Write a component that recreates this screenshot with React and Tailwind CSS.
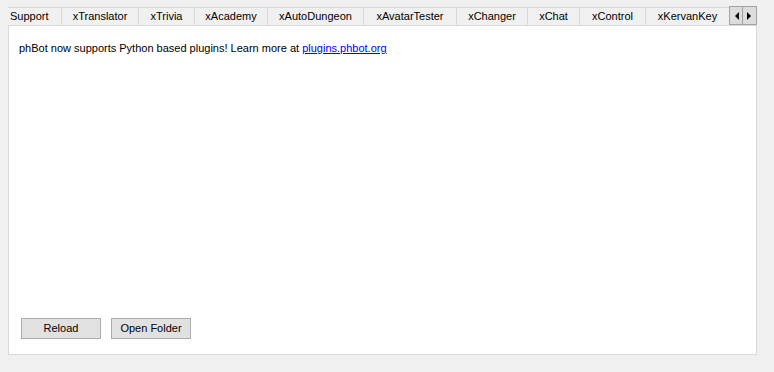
import React from "react";

const tabs = [
  { label: "Support", w: 53, left: true },
  { label: "xTranslator", w: 77 },
  { label: "xTrivia", w: 56 },
  { label: "xAcademy", w: 73 },
  { label: "xAutoDungeon", w: 96 },
  { label: "xAvatarTester", w: 93 },
  { label: "xChanger", w: 71 },
  { label: "xChat", w: 52 },
  { label: "xControl", w: 66 },
  { label: "xKervanKey", w: 84 },
];

export default function App() {
  return (
    <div
      className="relative w-[774px] h-[372px] bg-[#f0f0f0] text-[11px] text-black overflow-hidden"
      style={{ fontFamily: '"Liberation Sans", Arial, sans-serif' }}
    >
      <div className="pt-[7px] pl-[8px]">
        <div className="flex w-[749px] h-[18px] overflow-hidden">
          {tabs.map((t) => (
            <div
              key={t.label}
              className={
                "shrink-0 h-[18px] border-t border-[#d9d9d9] bg-[#f0f0f0] flex items-center leading-none " +
                (t.left ? "justify-start pl-[2px]" : "justify-center border-l")
              }
              style={{ width: t.w }}
            >
              {t.label}
            </div>
          ))}
          <div className="flex-1 h-[18px] border-t border-l border-[#d9d9d9]" />
        </div>
        <div className="w-[749px] h-[330px] bg-white border border-[#d9d9d9] flex flex-col justify-between pt-[15px] pl-[10px] pb-[15px]">
          <div className="leading-[14px]">
            phBot now supports Python based plugins! Learn more at{" "}
            <span className="text-[#0000ff] underline">plugins.phbot.org</span>
          </div>
          <div className="flex gap-[10px] pl-[2px]">
            <button className="w-[80px] h-[21px] bg-[#e1e1e1] border border-[#adadad] leading-none">
              Reload
            </button>
            <button className="w-[80px] h-[21px] bg-[#e1e1e1] border border-[#adadad] leading-none">
              Open Folder
            </button>
          </div>
        </div>
      </div>
      <div className="absolute left-[729px] top-[6px] flex">
        <div className="w-[14px] h-[19px] bg-[#dcdcdc] border border-[#a3a3a3] flex items-center justify-center">
          <svg width="5" height="8" viewBox="0 0 5 8">
            <polygon points="5,0 5,8 1,4" fill="#000" />
          </svg>
        </div>
        <div className="w-[14px] h-[19px] bg-[#dcdcdc] border border-[#a3a3a3] border-l-0 flex items-center justify-center">
          <svg width="5" height="8" viewBox="0 0 5 8">
            <polygon points="0,0 0,8 4,4" fill="#000" />
          </svg>
        </div>
      </div>
    </div>
  );
}
